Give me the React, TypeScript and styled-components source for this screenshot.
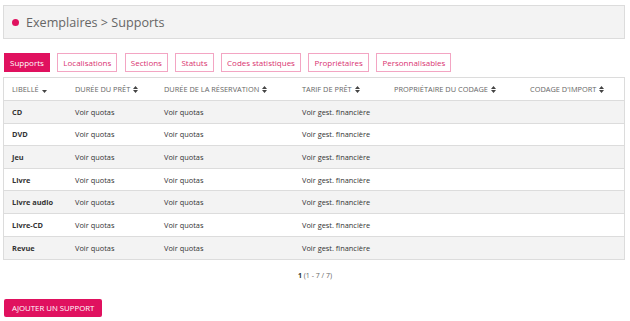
import styled, { createGlobalStyle } from "styled-components";

const GlobalStyle = createGlobalStyle`
  body {
    margin: 0;
    background: #ffffff;
    font-family: "Open Sans", "Liberation Sans", sans-serif;
    color: #333;
  }
`;

const Page = styled.div`
  padding: 5px 5px 0 3px;
  width: 630px;
  box-sizing: border-box;
`;

const Header = styled.div`
  height: 34px;
  box-sizing: border-box;
  background: #f3f3f3;
  border: 1px solid #dcdcdc;
  display: flex;
  align-items: center;
  padding-left: 8px;
  gap: 7px;
`;

const Dot = styled.span`
  width: 7px;
  height: 7px;
  border-radius: 50%;
  background: #e0115f;
`;

const Title = styled.h1`
  margin: 0;
  font-size: 12.6px;
  font-weight: 400;
  color: #666;
`;

const Tabs = styled.div`
  display: flex;
  gap: 7.5px;
  margin: 14px 0 0 1px;
`;

const Tab = styled.button<{ $active?: boolean }>`
  height: 19px;
  padding: 0 5px;
  font-family: inherit;
  font-size: 8px;
  border: 1px solid ${(p) => (p.$active ? "#e0115f" : "#f3a5c3")};
  background: ${(p) => (p.$active ? "#e0115f" : "#fff")};
  color: ${(p) => (p.$active ? "#fff" : "#d9326f")};
  border-radius: 0;
  cursor: pointer;
`;

const TableBox = styled.div`
  margin-top: 5px;
  border: 1px solid #dcdcdc;
`;

const Table = styled.table`
  width: 100%;
  border-collapse: collapse;
  table-layout: fixed;
  font-size: 7.4px;
`;

const Th = styled.th<{ $w?: number }>`
  width: ${(p) => (p.$w ? `${p.$w - 8}px` : "auto")};
  height: 22px;
  padding: 0 0 0 8px;
  text-align: left;
  font-weight: 400;
  color: #666;
  text-transform: uppercase;
  white-space: nowrap;
`;

const HeadInner = styled.span`
  display: inline-flex;
  align-items: center;
  gap: 3px;
`;

const Row = styled.tr<{ $odd: boolean }>`
  height: 22.6px;
  background: ${(p) => (p.$odd ? "#f3f3f3" : "#fff")};
  border-top: 1px solid #dcdcdc;
`;

const Td = styled.td<{ $bold?: boolean }>`
  padding: 0 0 0 8px;
  color: #333;
  font-weight: ${(p) => (p.$bold ? 700 : 400)};
  white-space: nowrap;
`;

const Pager = styled.div`
  text-align: center;
  font-size: 7px;
  color: #666;
  margin-top: 11px;
  padding-left: 2px;
  b {
    color: #333;
  }
`;

const AddButton = styled.button`
  margin: 19px 0 0 1px;
  height: 18px;
  padding: 0 8px;
  background: #e0115f;
  color: #fff;
  border: none;
  border-radius: 2px;
  font-family: inherit;
  font-size: 7.8px;
  text-transform: uppercase;
  cursor: pointer;
`;

const SortBoth = () => (
  <svg width="5" height="7" viewBox="0 0 5 7">
    <path d="M0 3 L2.5 0 L5 3 Z M0 4 L2.5 7 L5 4 Z" fill="#444" />
  </svg>
);

const SortDesc = () => (
  <svg width="5" height="7" viewBox="0 0 5 7">
    <path d="M0 4 L2.5 7 L5 4 Z" fill="#444" />
  </svg>
);

const tabs = [
  "Supports",
  "Localisations",
  "Sections",
  "Statuts",
  "Codes statistiques",
  "Propriétaires",
  "Personnalisables",
];

const columns: { label: string; w?: number; desc?: boolean }[] = [
  { label: "Libellé", w: 63, desc: true },
  { label: "Durée du prêt", w: 89 },
  { label: "Durée de la réservation", w: 138 },
  { label: "Tarif de prêt", w: 92 },
  { label: "Propriétaire du codage", w: 136 },
  { label: "Codage d'import" },
];

const rows = ["CD", "DVD", "Jeu", "Livre", "Livre audio", "Livre-CD", "Revue"];

export default function App() {
  return (
    <>
      <GlobalStyle />
      <Page>
        <Header>
          <Dot />
          <Title>Exemplaires &gt; Supports</Title>
        </Header>
        <Tabs>
          {tabs.map((t, i) => (
            <Tab key={t} $active={i === 0}>
              {t}
            </Tab>
          ))}
        </Tabs>
        <TableBox>
          <Table>
            <thead>
              <tr>
                {columns.map((c) => (
                  <Th key={c.label} $w={c.w}>
                    <HeadInner>
                      {c.label}
                      {c.desc ? <SortDesc /> : <SortBoth />}
                    </HeadInner>
                  </Th>
                ))}
              </tr>
            </thead>
            <tbody>
              {rows.map((r, i) => (
                <Row key={r} $odd={i % 2 === 0}>
                  <Td $bold>{r}</Td>
                  <Td>Voir quotas</Td>
                  <Td>Voir quotas</Td>
                  <Td>Voir gest. financière</Td>
                  <Td />
                  <Td />
                </Row>
              ))}
            </tbody>
          </Table>
        </TableBox>
        <Pager>
          <b>1</b> (1 - 7 / 7)
        </Pager>
        <AddButton>Ajouter un support</AddButton>
      </Page>
    </>
  );
}
